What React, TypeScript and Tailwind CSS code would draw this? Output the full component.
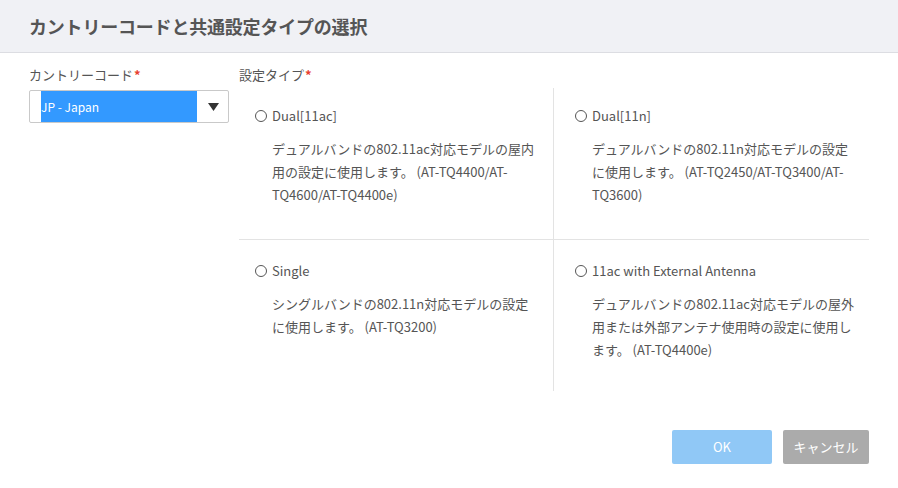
import React from 'react';

const TYPES = [
  {
    id: 'dual11ac',
    label: 'Dual[11ac]',
    desc: 'デュアルバンドの802.11ac対応モデルの屋内用の設定に使用します。 (AT-TQ4400/AT-TQ4600/AT-TQ4400e)',
  },
  {
    id: 'dual11n',
    label: 'Dual[11n]',
    desc: 'デュアルバンドの802.11n対応モデルの設定に使用します。 (AT-TQ2450/AT-TQ3400/AT-TQ3600)',
  },
  {
    id: 'single',
    label: 'Single',
    desc: 'シングルバンドの802.11n対応モデルの設定に使用します。 (AT-TQ3200)',
  },
  {
    id: 'ext',
    label: '11ac with External Antenna',
    desc: 'デュアルバンドの802.11ac対応モデルの屋外用または外部アンテナ使用時の設定に使用します。 (AT-TQ4400e)',
  },
];

const Radio = () => (
  <span className="inline-block w-[12px] h-[12px] rounded-full border border-[#555] bg-white shrink-0" />
);

const TypeCell = ({ item, right, bottom }: { item: (typeof TYPES)[number]; right?: boolean; bottom?: boolean }) => (
  <div
    className={`${right ? 'border-l border-[#e3e3e3] pl-[21px] pr-[14px]' : 'pl-[16px] pr-[16px]'} ${
      bottom ? 'pt-[21px] pb-[30px]' : 'pt-[18px] pb-[33px] border-b border-[#e3e3e3]'
    }`}
  >
    <label className="flex items-center gap-[5px] h-[20px] text-[13px] text-[#555]">
      <Radio />
      <span>{item.label}</span>
    </label>
    <p className="mt-[11px] pl-[17px] text-[13px] leading-[23px] text-[#555]">{item.desc}</p>
  </div>
);

export default function App() {
  return (
    <div
      className="w-[898px] h-[488px] bg-white flex flex-col"
      style={{ fontFamily: '"Noto Sans CJK JP", "Noto Sans", sans-serif' }}
    >
      <header className="h-[53px] shrink-0 bg-[#f0f1f5] border-b border-[#dcdde2] flex items-center px-[29px]">
        <h1 className="text-[18px] font-bold text-[#555] tracking-[-0.2px]">カントリーコードと共通設定タイプの選択</h1>
      </header>

      <main className="flex-1 flex pt-[13px] pl-[29px] pr-[29px]">
        <section className="w-[210px] shrink-0">
          <div className="text-[13px] leading-[18px] text-[#555]">
            カントリーコード<span className="text-[#e8412f] font-bold ml-[1px]">*</span>
          </div>
          <div className="mt-[6px] w-[200px] h-[33px] border border-[#c9c9c9] rounded-[2px] flex items-center pl-[11px] pr-[9px]">
            <div className="w-[156px] h-[31px] bg-[#3399ff] flex items-center text-white text-[12px]">
              JP - Japan
            </div>
            <div className="flex-1 flex justify-end">
              <svg width="11" height="8" viewBox="0 0 11 8">
                <path d="M0 0 H11 L5.5 8 Z" fill="#333" />
              </svg>
            </div>
          </div>
        </section>

        <section className="flex-1 flex flex-col">
          <div className="text-[13px] leading-[18px] text-[#555]">
            設定タイプ<span className="text-[#e8412f] font-bold ml-[1px]">*</span>
          </div>
          <div className="mt-[4px] grid grid-cols-[314px_1fr]">
            <TypeCell item={TYPES[0]} />
            <TypeCell item={TYPES[1]} right />
            <TypeCell item={TYPES[2]} bottom />
            <TypeCell item={TYPES[3]} right bottom />
          </div>
          <div className="flex justify-end gap-[11px] mt-auto mb-[24px]">
            <button className="w-[100px] h-[34px] rounded-[2px] bg-[#90c8f6] text-white text-[13px]">OK</button>
            <button className="w-[86px] h-[34px] rounded-[2px] bg-[#ababab] text-white text-[13px]">キャンセル</button>
          </div>
        </section>
      </main>
    </div>
  );
}
